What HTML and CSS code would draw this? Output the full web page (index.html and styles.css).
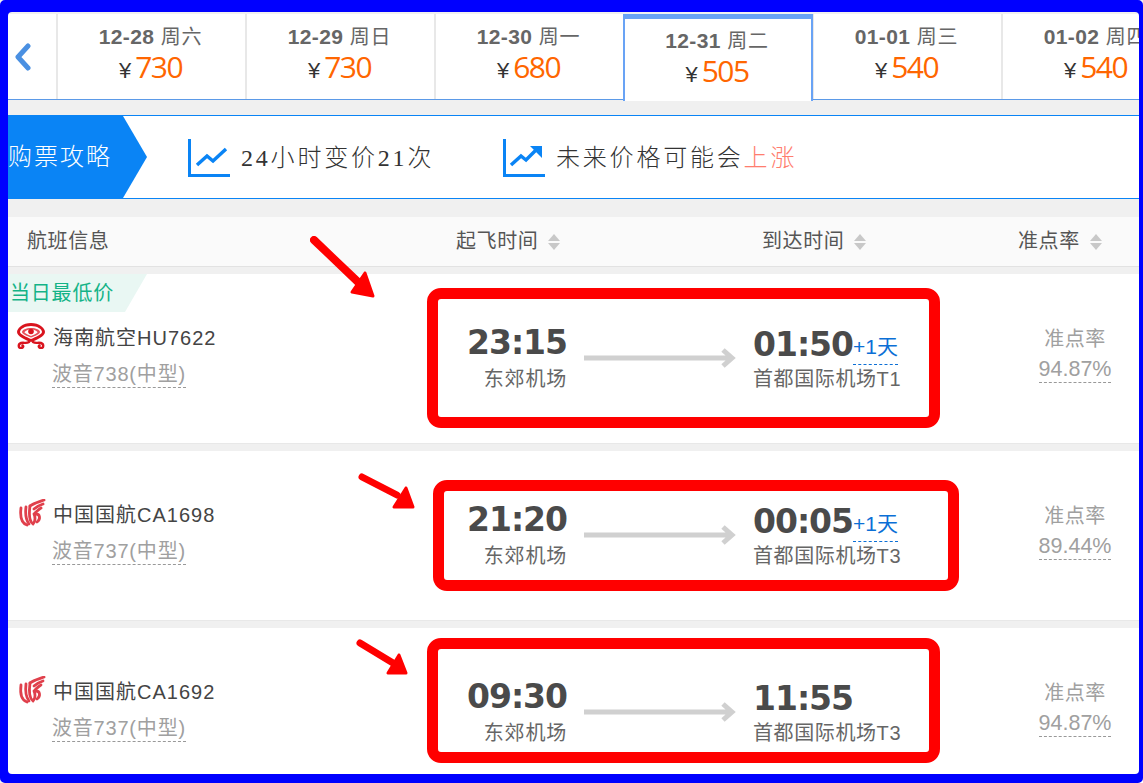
FILE: index.html
```html
<!DOCTYPE html>
<html lang="zh">
<head>
<meta charset="utf-8">
<title>航班列表</title>
<link rel="stylesheet" href="styles.css">
</head>
<body>
<div class="page">
  <nav class="tabs">
    <div class="prev"><svg width="18" height="28" viewBox="0 0 18 28"><path d="M14 3 L4 14 L14 25" fill="none" stroke="#4a90e2" stroke-width="5" stroke-linejoin="round" stroke-linecap="round"/></svg></div>
    <div class="tab"><div class="date"><b>12-28</b> 周六</div><div class="price"><span class="yen">¥</span>730</div></div>
    <div class="tab"><div class="date"><b>12-29</b> 周日</div><div class="price"><span class="yen">¥</span>730</div></div>
    <div class="tab"><div class="date"><b>12-30</b> 周一</div><div class="price"><span class="yen">¥</span>680</div></div>
    <div class="tab active"><div class="date"><b>12-31</b> 周二</div><div class="price"><span class="yen">¥</span>505</div></div>
    <div class="tab"><div class="date"><b>01-01</b> 周三</div><div class="price"><span class="yen">¥</span>540</div></div>
    <div class="tab"><div class="date"><b>01-02</b> 周四</div><div class="price"><span class="yen">¥</span>540</div></div>
  </nav>

  <section class="advice">
    <div class="advice-tag">购票攻略</div>
    <div class="advice-item first">
      <svg width="42" height="38" viewBox="0 0 42 38"><path d="M1.500 0V36.500H42" fill="none" stroke="#0a84f5" stroke-width="3"/><path d="M9 26 L19 17 L25 22 L38 10" fill="none" stroke="#0a84f5" stroke-width="3.500"/></svg>
      <span>24小时变价21次</span>
    </div>
    <div class="advice-item second">
      <svg width="42" height="38" viewBox="0 0 42 38"><path d="M1.500 0V36.500H42" fill="none" stroke="#0a84f5" stroke-width="3"/><path d="M8 26 L18 17 L23 21 L34 10" fill="none" stroke="#0a84f5" stroke-width="3.500"/><path d="M27 7H39V19Z" fill="#0a84f5"/></svg>
      <span>未来价格可能会<em class="rise">上涨</em></span>
    </div>
  </section>

  <header class="list-head">
    <div class="col-flight">航班信息</div>
    <div class="col-dep">起飞时间<i class="sort"></i></div>
    <div class="col-arr">到达时间<i class="sort"></i></div>
    <div class="col-rate">准点率<i class="sort"></i></div>
  </header>

  <article class="flight">
    <div class="lowest">当日最低价</div>
    <div class="airline">
      <div class="name">
        <svg class="logo" width="30" height="26" viewBox="0 0 30 26"><path d="M15 0C23 0 29 5 29 9C29 13 21 17 15 19C9 17 1 13 1 9C1 5 7 0 15 0Z" fill="#d9141e"/><path d="M15 3C21 3 26 6 26 9C26 11 20 14 15 16C10 14 4 11 4 9C4 6 9 3 15 3Z" fill="#fff"/><path d="M15 5C20 5 24 7 24 9C24 11 19 13 15 14.500C11 13 6 11 6 9C6 7 10 5 15 5Z" fill="#e8505a"/><path d="M15 6.500C18 6.500 21.500 8 21.500 9.500C20 11 17 12 15 13C13 12 10 11 8.500 9.500C8.500 8 12 6.500 15 6.500Z" fill="#fff"/><circle cx="15" cy="8.500" r="2.800" fill="#d9141e"/><g fill="none" stroke="#d9141e" stroke-width="2.400" stroke-linecap="round"><path d="M13 19C10 21 8 19 5 20C2 21 2 25 5 25C7 25 8 23 6.500 22.500"/><path d="M17 19C20 21 22 19 25 20C28 21 28 25 25 25C23 25 22 23 23.500 22.500"/></g></svg>
        <span>海南航空HU7622</span>
      </div>
      <div class="plane"><span>波音738(中型)</span></div>
    </div>
    <div class="times">
      <div class="dep"><strong>23:15</strong><small>东郊机场</small></div>
      <svg class="route" width="152" height="20" viewBox="0 0 152 20"><path d="M0 10H148M139 2L148 10L139 18" fill="none" stroke="#d0d0d0" stroke-width="5"/></svg>
      <div class="arr"><div class="arr-time"><strong>01:50</strong><em class="plus">+1天</em></div><small>首都国际机场T1</small></div>
    </div>
    <div class="rate"><span>准点率</span><b>94.87%</b></div>
    <div class="mark mark-1"></div>
    <svg class="pointer pointer-1" width="66" height="64" viewBox="0 0 66 64"><path d="M4 4L48 46" stroke="#f00" stroke-width="8" stroke-linecap="round"/><path d="M42 56L63 60L55 37Z" fill="#f00" stroke="#f00" stroke-width="3" stroke-linejoin="round"/></svg>
  </article>

  <article class="flight">
    <div class="airline">
      <div class="name">
        <svg class="logo" width="30" height="28" viewBox="0 0 30 28"><g fill="none" stroke="#e0404c" stroke-width="2.800" stroke-linecap="round"><path d="M5 9C4 17 5 24 11 26"/><path d="M10 8C9 16 10 21 13 25"/><path d="M14 7C13 14 13 22 17 25C20 22 19 17 18 15"/><path d="M14 7C18 4 23 3 28 1"/><path d="M18 10C21 7 24 6 27 5"/><path d="M19 14C21 12 23 10 25 9"/><path d="M20 15C24 15 25 20 21 23"/></g></svg>
        <span>中国国航CA1698</span>
      </div>
      <div class="plane"><span>波音737(中型)</span></div>
    </div>
    <div class="times">
      <div class="dep"><strong>21:20</strong><small>东郊机场</small></div>
      <svg class="route" width="152" height="20" viewBox="0 0 152 20"><path d="M0 10H148M139 2L148 10L139 18" fill="none" stroke="#d0d0d0" stroke-width="5"/></svg>
      <div class="arr"><div class="arr-time"><strong>00:05</strong><em class="plus">+1天</em></div><small>首都国际机场T3</small></div>
    </div>
    <div class="rate"><span>准点率</span><b>89.44%</b></div>
    <div class="mark mark-2"></div>
    <svg class="pointer pointer-2" width="66" height="44" viewBox="0 0 66 44"><path d="M5 4L40 22" stroke="#f00" stroke-width="7" stroke-linecap="round"/><path d="M37 34L56 34L49 15Z" fill="#f00" stroke="#f00" stroke-width="3" stroke-linejoin="round"/></svg>
  </article>

  <article class="flight">
    <div class="airline">
      <div class="name">
        <svg class="logo" width="30" height="28" viewBox="0 0 30 28"><g fill="none" stroke="#e0404c" stroke-width="2.800" stroke-linecap="round"><path d="M5 9C4 17 5 24 11 26"/><path d="M10 8C9 16 10 21 13 25"/><path d="M14 7C13 14 13 22 17 25C20 22 19 17 18 15"/><path d="M14 7C18 4 23 3 28 1"/><path d="M18 10C21 7 24 6 27 5"/><path d="M19 14C21 12 23 10 25 9"/><path d="M20 15C24 15 25 20 21 23"/></g></svg>
        <span>中国国航CA1692</span>
      </div>
      <div class="plane"><span>波音737(中型)</span></div>
    </div>
    <div class="times">
      <div class="dep"><strong>09:30</strong><small>东郊机场</small></div>
      <svg class="route" width="152" height="20" viewBox="0 0 152 20"><path d="M0 10H148M139 2L148 10L139 18" fill="none" stroke="#d0d0d0" stroke-width="5"/></svg>
      <div class="arr"><div class="arr-time"><strong>11:55</strong></div><small>首都国际机场T3</small></div>
    </div>
    <div class="rate"><span>准点率</span><b>94.87%</b></div>
    <div class="mark mark-3"></div>
    <svg class="pointer pointer-3" width="60" height="44" viewBox="0 0 60 44"><path d="M5 4L38 24" stroke="#f00" stroke-width="7" stroke-linecap="round"/><path d="M33 34L51 34L44 16Z" fill="#f00" stroke="#f00" stroke-width="3" stroke-linejoin="round"/></svg>
  </article>
</div>
<div class="frame"></div>
</body>
</html>
```
FILE: styles.css
```css
* { box-sizing: border-box; }
html, body { margin: 0; height: 100%; }
body {
  background: #fff;
  font-family: "Liberation Sans", "Noto Sans CJK SC", sans-serif;
  overflow: hidden;
}
.page { width: 1143px; height: 783px; padding: 14px 0 0 8px; overflow: hidden; background: #f0f0f0; }
.frame {
  position: absolute; left: 0; top: 0; width: 1143px; height: 783px;
  border: solid #0000ff; border-width: 12px 4px 9px 8px;
  border-radius: 5px; pointer-events: none;
}
.frame::after {
  content: ""; position: absolute; inset: 0;
  border-radius: 4px; box-shadow: 0 0 0 4px #0000ff;
}
.tabs { display: flex; height: 86px; background: #fff; border-bottom: 1px solid #5b9ae8; width: 1200px; }
.prev { width: 48px; flex: none; display: flex; align-items: center; padding-left: 6px; }
.tab {
  width: 189px; flex: none; text-align: center; border-left: 2px solid #e8e8e8;
  padding: 10px 2px 0 0; height: 85px;
}
.date { font-size: 20px; line-height: 26px; color: #666; letter-spacing: .8px; }
.date b { font-size: 21px; letter-spacing: .4px; }
.price {
  font-family: "Open Sans", sans-serif; font-size: 30px; line-height: 36px; color: #ff6600;
  letter-spacing: -1.500px; margin-top: -1px;
}
.yen { font-family: "Liberation Sans", sans-serif; font-size: 22px; color: #333; margin-right: 4px; letter-spacing: 0; }
.tab.active {
  border: 2px solid #69a3f5; border-top: 5px solid #69a3f5; border-bottom: 0; height: 87px;
  position: relative; padding: 9px 2px 0 0; background: #fff; width: 190px; margin-right: -1px; z-index: 1;
}
.advice {
  margin-top: 15px; height: 84px; background: #fff;
  border-top: 1px solid #0a84f5; border-bottom: 1px solid #0a84f5;
  display: flex; align-items: center; font-family: "Liberation Serif", "Noto Sans CJK SC", serif;
  font-size: 24px; color: #333; letter-spacing: 2.800px; font-weight: 300;
}
.advice-tag {
  width: 139px; height: 82px; background: #0a84f5; color: #fff; letter-spacing: 2px;
  clip-path: polygon(0 0, 115px 0, 139px 41px, 115px 100%, 0 100%);
  line-height: 82px; flex: none;
}
.advice-item { display: flex; align-items: center; gap: 11px; }
.advice-item svg { margin-top: 2px; }
.advice-item span { margin-top: -4px; }
.advice-item.first { margin-left: 41px; width: 315px; }
.rise { font-style: normal; color: #ff7d6e; }
.list-head {
  margin-top: 18px; height: 50px; background: #fafafa; border-bottom: 1px solid #e2e2e2; padding-bottom: 2px;
  display: flex; align-items: center; font-size: 20px; letter-spacing: .6px; color: #555; line-height: 46px;
}
.col-flight { margin-left: 19px; width: 429px; }
.col-dep, .col-arr, .col-rate { display: flex; align-items: center; }
.col-dep { width: 306px; }
.col-arr { width: 256px; }
.col-rate { width: 120px; }
.sort { display: flex; flex-direction: column; gap: 2px; margin-left: 10px; margin-top: 2px; }
.sort::before, .sort::after { content: ""; width: 0; height: 0; border: 6.500px solid transparent; }
.sort::before { border-bottom: 7px solid #c8c8c8; border-top: 0; }
.sort::after { border-top: 7px solid #c8c8c8; border-bottom: 0; }
.flight {
  position: relative; height: 170px; margin-top: 7px; background: #fff;
  border-bottom: 1px solid #e8e8e8; display: flex;
}
.lowest {
  position: absolute; left: 0; top: 0; width: 139px; height: 38px; background: #e9f7f3;
  color: #14b387; font-size: 20px; line-height: 38px; padding-left: 2px; letter-spacing: .8px;
  clip-path: polygon(0 0, 139px 0, 117px 100%, 0 100%);
}
.airline { width: 412px; flex: none; padding-top: 48px; }
.name { display: flex; align-items: center; height: 28px; font-size: 20px; color: #444; letter-spacing: 1px; }
.logo { margin-left: 8px; margin-right: 7px; flex: none; width: 30px; }
.plane { padding-left: 44px; margin-top: 11px; font-size: 20px; color: #a0a0a0; line-height: 26px; }
.plane span { display: inline-block; border-bottom: 1px dashed #999; letter-spacing: .8px; }
.times { width: 590px; flex: none; display: flex; align-items: flex-start; padding-top: 51px; }
.dep { width: 147px; flex: none; text-align: right; }
.dep strong, .arr strong {
  display: block; font-family: "DejaVu Sans", sans-serif; font-weight: 700; font-size: 33px; letter-spacing: -1px; line-height: 36px; color: #4a4a4a;
}
.dep small, .arr small { display: block; font-size: 20px; line-height: 28px; color: #666; margin-top: 4px; letter-spacing: .6px; }
.dep small { letter-spacing: .8px; }
.route { margin: 23px 0 0 17px; flex: none; }
.arr { margin-left: 17px; width: 200px; }
.arr-time { display: flex; align-items: flex-end; height: 38px; }
.arr-time strong { height: 36px; }
.plus {
  font-style: normal; font-size: 21px; color: #0b6fd6; line-height: 25px; border-bottom: 1px dashed #0b6fd6; margin-bottom: -2px;
  height: 34px; padding-top: 3px;
}
.arr small { margin-top: 2px; }
.rate { width: 98px; flex: none; margin-left: 16px; padding-top: 50px; text-align: center; color: #a0a0a0; font-size: 20px; line-height: 30px; }
.rate span { display: block; letter-spacing: .5px; }
.rate b { display: inline-block; font-size: 21.500px; font-weight: 400; margin-top: 1px; border-bottom: 1px dashed #999; line-height: 26px; }
.mark { position: absolute; border: 11px solid #f00; border-radius: 14px; }
.mark-1 { left: 419px; top: 14px; width: 513px; height: 140px; }
.mark-2 { left: 425px; top: 29px; width: 526px; height: 111px; }
.mark-3 { left: 419px; top: 10px; width: 513px; height: 125px; }
.pointer { position: absolute; }
.pointer-1 { left: 302px; top: -38px; }
.pointer-2 { left: 349px; top: 22px; }
.pointer-3 { left: 347px; top: 11px; }
```
